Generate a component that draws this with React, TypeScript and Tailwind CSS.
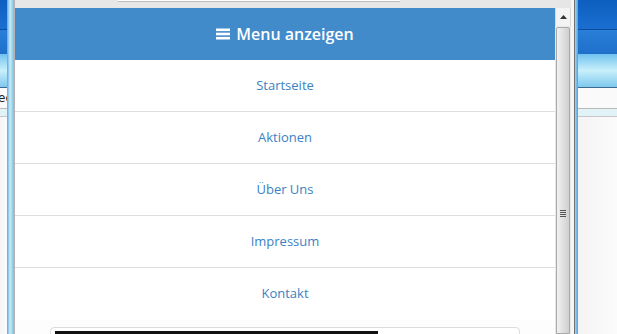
const items = ["Startseite", "Aktionen", "Über Uns", "Impressum", "Kontakt"];

function BackWindow({ side }: { side: "left" | "right" }) {
  return (
    <div className="flex flex-col h-full w-full">
      <div className="h-[30px] shrink-0 bg-gradient-to-b from-[#0d5fbf] to-[#1a6fd0] border-b border-[#0b4d9c]" />
      <div className="h-[24px] shrink-0 bg-gradient-to-b from-[#2a7fd8] to-[#1e6fc9]" />
      <div className="h-[34px] shrink-0 bg-gradient-to-b from-[#6fc2ef] via-[#c8f0fb] to-[#7ec8ee] border-b border-[#3d6c8f]" />
      <div className="h-[21px] shrink-0 bg-[#fafafa] border-b border-[#b9b9b9] text-[12px] leading-[21px] text-[#222] overflow-hidden whitespace-nowrap" style={{ fontFamily: "'DejaVu Sans', sans-serif" }}>
        {side === "left" ? <span className="-ml-[2px]">ec</span> : null}
      </div>
      <div className="h-[8px] shrink-0 bg-[#e2f3f8] border-b border-[#c8c8c8]" />
      <div className="flex-1 bg-gradient-to-r from-[#f4f4f4] to-[#fbfbfb]" />
    </div>
  );
}

function Scrollbar() {
  return (
    <div className="w-[16px] h-full shrink-0 flex flex-col bg-[#e9e9e9]">
      <div className="h-[8px] shrink-0 bg-[#e6e6e6]" />
      <div className="h-[18px] shrink-0 flex items-center justify-center bg-[#f3f3f3] border-x border-[#d9d9d9]">
        <svg width="7" height="4" viewBox="0 0 7 4">
          <path d="M0 4 L3.5 0 L7 4 Z" fill="#333" />
        </svg>
      </div>
      <div className="flex-1 mx-[1px] mt-[1px] rounded-t-[2px] border border-[#a9a9a9] bg-gradient-to-r from-[#f2f2f2] via-[#e0e0e0] to-[#cfcfcf] flex flex-col items-center pt-[182px]">
        <div className="flex flex-col gap-[1px]">
          <div className="w-[6px] h-[1px] bg-[#555]" />
          <div className="w-[6px] h-[1px] bg-[#555]" />
          <div className="w-[6px] h-[1px] bg-[#555]" />
          <div className="w-[6px] h-[1px] bg-[#555]" />
        </div>
      </div>
    </div>
  );
}

export default function App() {
  return (
    <div className="w-[617px] h-[334px] overflow-hidden flex bg-white" style={{ fontFamily: "'Open Sans', sans-serif" }}>
      <div className="w-[7px] h-full shrink-0">
        <BackWindow side="left" />
      </div>
      <div className="w-[6px] h-full shrink-0 bg-gradient-to-r from-[#5aa8e0] via-[#c9ecf8] to-[#8fcbe9]" />
      <div className="w-[2px] h-full shrink-0 bg-[#b4b4b4]" />

      <div className="w-[540px] h-full shrink-0 flex flex-col bg-white overflow-hidden">
        <div className="h-[8px] shrink-0 bg-[#e7e7e7] relative">
          <div className="absolute left-[103px] w-[282px] top-0 h-[2px] bg-white border-b border-[#bdbdbd]" />
        </div>
        <button className="h-[52px] shrink-0 bg-[#428bca] text-white flex items-center justify-center gap-[6px] text-[16px] font-semibold">
          <svg width="14" height="12" viewBox="0 0 14 12">
            <rect x="0" y="0.5" width="14" height="2.6" fill="white" />
            <rect x="0" y="4.7" width="14" height="2.6" fill="white" />
            <rect x="0" y="8.9" width="14" height="2.6" fill="white" />
          </svg>
          Menu anzeigen
        </button>
        <ul className="shrink-0 shadow-[0_2px_2px_rgba(0,0,0,0.12)]">
          {items.map((item) => (
            <li key={item} className="h-[52px] border-b border-[#dedede] last:border-b-0 flex items-center justify-center text-[13px] text-[#3a82c4]">
              {item}
            </li>
          ))}
        </ul>
        <div className="flex-1 shrink-0 bg-[#fdfdfd] pt-[7px] pl-[35px]">
          <div className="w-[470px] h-[20px] rounded-t-[4px] border border-[#dcdcdc] bg-white pt-[3px] px-[4px]">
            <div className="w-[323px] h-[10px] bg-[#111]" />
          </div>
        </div>
      </div>

      <Scrollbar />
      <div className="w-[4px] h-full shrink-0 bg-[#f5f5f5] border-r border-[#707070]" />
      <div className="w-[3px] h-full shrink-0 bg-gradient-to-r from-[#9fd6f2] to-[#4aa0e0]" />
      <div className="flex-1 h-full">
        <BackWindow side="right" />
      </div>
    </div>
  );
}
